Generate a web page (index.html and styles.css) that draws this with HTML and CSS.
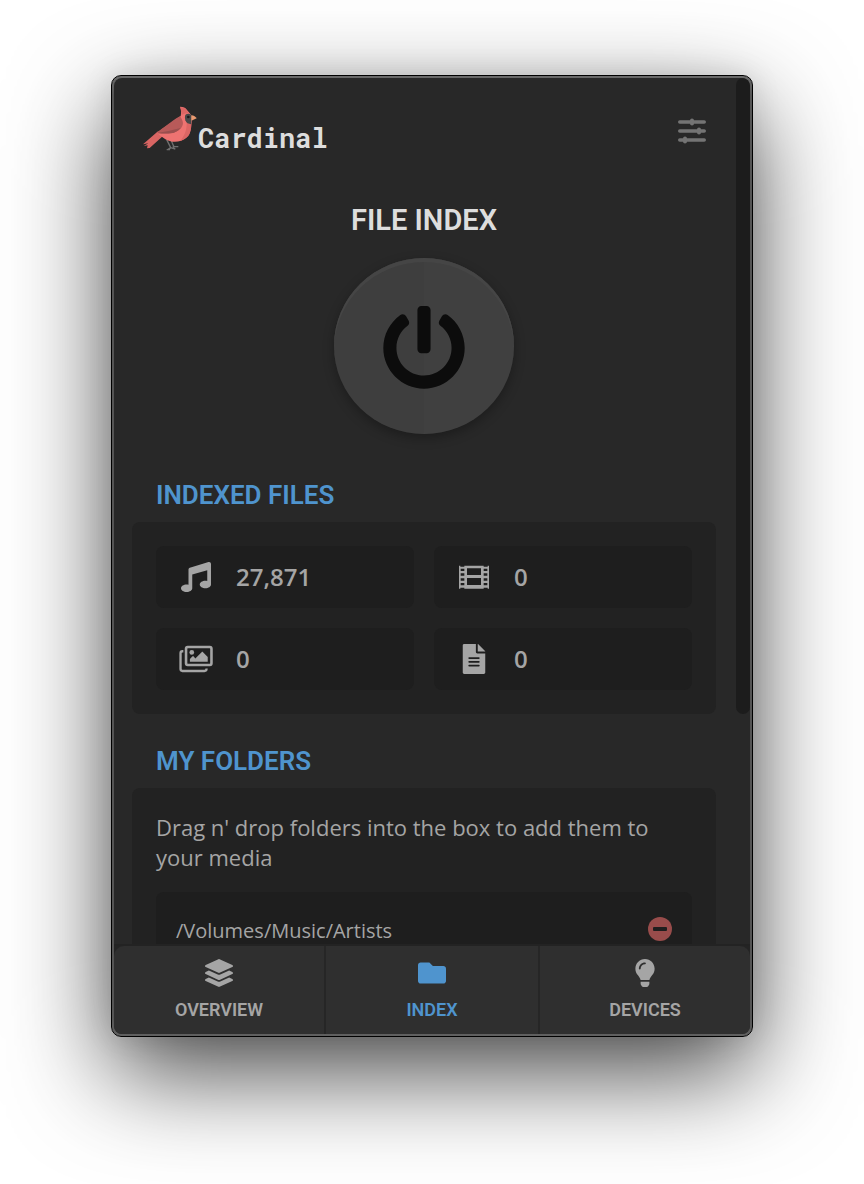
FILE: index.html
```html
<!DOCTYPE html>
<html lang="en">
<head>
<meta charset="utf-8">
<meta name="viewport" content="width=device-width, initial-scale=1">
<title>Cardinal</title>
<link rel="stylesheet" href="styles.css">
</head>
<body>
<div class="window">
  <div class="view">
    <main class="content">
      <header class="header">
        <div class="brand">
          <svg class="brand-bird" viewBox="15 20 162 132" aria-hidden="true">
            <path fill="none" stroke="#707070" stroke-width="4" d="M86 118l12 24M99 119l8 19M90 147l8-5 14 4M98 142l-4 5M104 139h17M110 138l-4 4M86 148h10"/>
            <path fill="#d96563" d="M60 93L15 132l16-3-14 8 12-2-2 9 8-1L74 108z"/>
            <path fill="#ee7371" d="M56 97l72-50c2-8 0-12 2-16l-4-12c10 0 17 3 21 10l12 14c4 8 5 16 1 30-1 16-5 30-14 38-12 11-28 15-43 13-22-4-32-17-47-27z"/>
            <path fill="#dc6664" d="M127 21c12 1 16 4 20 10l6 9c-10-2-16 0-22 4zM146 64c6 8 11 8 14 8 0 14-3 27-9 35-6 7-15 12-24 15 14-18 20-36 19-58z"/>
            <path fill="#b85a59" d="M126 48c10 14 12 24 4 34-8 9-18 15-32 17-14 2-26 0-41-1 9-10 20-16 29-23 14-10 27-22 40-27z"/>
            <path fill="#9a4f4e" d="M57 98c24-4 44-8 72-16-10 11-20 16-32 17-14 2-26 0-40-1z"/>
            <path fill="#484848" d="M144 42c8-4 14-2 17 4v14l-2 12c-8-1-14-4-17-12-2-8-2-14 2-18z"/>
            <circle cx="151" cy="50" r="4" fill="#191919"/>
            <path fill="#e99a70" d="M160 45c8 0 13 5 16 9l-16 7z"/>
          </svg>
          <span class="brand-name">Cardinal</span>
        </div>
        <button class="icon-button" type="button" aria-label="Settings">
          <svg viewBox="0 0 28 26" aria-hidden="true">
            <path fill="none" stroke="currentColor" stroke-width="3.600" stroke-linecap="round" d="M1.800 4h24.400M1.800 13h24.400M1.800 22h24.400"/>
            <path fill="none" stroke="currentColor" stroke-width="4" stroke-linecap="round" d="M14 2.500v3M21 11.500v3M7 20.500v3"/>
          </svg>
        </button>
      </header>

      <section class="power">
        <h1 class="power-title">FILE INDEX</h1>
        <button class="power-button" type="button" aria-label="Toggle file index">
          <svg viewBox="0 0 512 512" aria-hidden="true"><path fill="currentColor" d="M400 54.1c63 45 104 118.6 104 201.9 0 136.8-110.8 247.7-247.5 248C120 504.3 8.2 393 8 256.4 7.9 173.1 48.9 99.3 111.8 54.2c11.7-8.3 28-4.8 35 7.7L162.6 90c5.9 10.5 3.1 23.8-6.6 31-41.5 30.8-68 79.6-68 134.9-.1 92.3 74.5 168.1 168 168.1 91.6 0 168.6-74.2 168-169.1-.3-51.8-24.7-101.8-68.1-134-9.7-7.2-12.4-20.5-6.5-30.9l15.8-28.1c7-12.4 23.2-16.1 34.8-7.8zM296 264V24c0-13.3-10.7-24-24-24h-32c-13.3 0-24 10.7-24 24v240c0 13.3 10.7 24 24 24h32c13.3 0 24-10.7 24-24z"/></svg>
        </button>
      </section>

      <section class="group">
        <h2 class="group-title">INDEXED FILES</h2>
        <div class="panel stats">
          <div class="stat">
            <svg class="stat-icon" viewBox="0 0 512 512" role="img" aria-label="Music"><path fill="currentColor" d="M511.99 32.01c0-21.71-21.1-37.01-41.6-30.51L150.4 96c-13.3 4.2-22.4 16.5-22.4 30.5v261.42c-10.05-2.38-20.72-3.92-32-3.92-53.02 0-96 28.65-96 64s42.98 64 96 64 96-28.65 96-64V214.31l256-75.02v184.63c-10.05-2.38-20.72-3.92-32-3.92-53.02 0-96 28.65-96 64s42.98 64 96 64 96-28.65 96-64l-.01-351.99z"/></svg>
            <span>27,871</span>
          </div>
          <div class="stat">
            <svg class="stat-icon" viewBox="0 0 90 90" role="img" aria-label="Video"><path fill="currentColor" fill-rule="evenodd" d="M0 11h4v3h12v-3h58v3h12v-3h4v69h-4v-3H74v3H16v-3H4v3H0zM24 19v20h42V19zM24 48v21h42V48zM5 20v7h11v-7zM5 34v7h11v-7zM5 49v7h11v-7zM5 63v7h11v-7zM74 20v7h11v-7zM74 34v7h11v-7zM74 49v7h11v-7zM74 63v7h11v-7z"/></svg>
            <span>0</span>
          </div>
          <div class="stat">
            <svg class="stat-icon" viewBox="0 0 576 512" role="img" aria-label="Images">
              <path fill="none" stroke="currentColor" stroke-width="40" d="M72 124H56c-20 0-32 12-32 32v272c0 20 12 32 32 32h376c24 0 36-12 36-36v-8"/>
              <rect x="118" y="52" width="434" height="306" rx="28" fill="none" stroke="currentColor" stroke-width="44"/>
              <circle cx="216" cy="144" r="40" fill="currentColor"/>
              <path fill="currentColor" d="M184 304v-48l40-42c10-8 18-8 26 0l26 32 108-106c8-8 16-8 24 0l80 80v84z"/>
            </svg>
            <span>0</span>
          </div>
          <div class="stat">
            <svg class="stat-icon" viewBox="-64 0 512 512" role="img" aria-label="Documents"><path fill="currentColor" fill-rule="evenodd" d="M224 136V0H24C10.700 0 0 10.700 0 24v464c0 13.300 10.700 24 24 24h336c13.300 0 24-10.700 24-24V160H248c-13.200 0-24-10.800-24-24zM288 372c0 6.600-5.400 12-12 12H108c-6.600 0-12-5.400-12-12v-8c0-6.600 5.400-12 12-12h168c6.600 0 12 5.400 12 12zM288 308c0 6.600-5.400 12-12 12H108c-6.600 0-12-5.400-12-12v-8c0-6.600 5.400-12 12-12h168c6.600 0 12 5.400 12 12zM288 244c0 6.600-5.400 12-12 12H108c-6.600 0-12-5.400-12-12v-8c0-6.600 5.400-12 12-12h168c6.600 0 12 5.400 12 12zM384 128v-6L262 0h-6v128z"/></svg>
            <span>0</span>
          </div>
        </div>
      </section>

      <section class="group">
        <h2 class="group-title">MY FOLDERS</h2>
        <div class="panel">
          <p class="hint">Drag n' drop folders into the box to add them to your media</p>
          <ul class="folders">
            <li class="folder">
              <span>/Volumes/Music/Artists</span>
              <button class="remove-button" type="button" aria-label="Remove /Volumes/Music/Artists">
                <svg viewBox="0 0 24 24" aria-hidden="true"><circle cx="12" cy="12" r="12" fill="currentColor"/><rect x="5" y="10" width="14" height="4" rx="1" fill="#1e1e1e"/></svg>
              </button>
            </li>
          </ul>
        </div>
      </section>
    </main>
    <div class="scroll-track"><div class="scroll-thumb"></div></div>
  </div>

  <nav class="tabs">
    <a class="tab" href="#overview">
      <svg viewBox="0 0 512 512" aria-hidden="true"><path fill="currentColor" d="M12.410 148.020l232.940 105.670c6.800 3.090 14.490 3.090 21.290 0l232.940-105.670c16.550-7.510 16.550-32.520 0-40.030L266.650 2.310a25.607 25.607 0 0 0-21.290 0L12.410 107.980c-16.550 7.510-16.550 32.530 0 40.040zm487.180 88.280l-58.090-26.330-161.640 73.270c-7.560 3.430-15.590 5.170-23.860 5.170s-16.290-1.740-23.860-5.170L70.510 209.970l-58.100 26.330c-16.550 7.500-16.550 32.500 0 40l232.940 105.590c6.800 3.080 14.490 3.080 21.290 0L499.590 276.300c16.550-7.500 16.550-32.500 0-40zm0 127.800l-57.870-26.230-161.860 73.370c-7.560 3.430-15.590 5.170-23.860 5.170s-16.290-1.740-23.860-5.170L70.290 337.870 12.410 364.100c-16.550 7.500-16.550 32.500 0 40l232.940 105.590c6.800 3.080 14.490 3.080 21.290 0L499.590 404.100c16.550-7.500 16.550-32.500 0-40z"/></svg>
      OVERVIEW
    </a>
    <a class="tab tab-active" href="#index" aria-current="page">
      <svg viewBox="0 0 512 512" aria-hidden="true"><path fill="currentColor" d="M464 128H272l-64-64H48C21.490 64 0 85.490 0 112v288c0 26.510 21.490 48 48 48h416c26.510 0 48-21.490 48-48V176c0-26.510-21.490-48-48-48z"/></svg>
      INDEX
    </a>
    <a class="tab" href="#devices">
      <svg viewBox="-80 0 512 512" aria-hidden="true"><path fill="currentColor" d="M96.060 454.350c.01 6.290 1.870 12.450 5.360 17.690l17.090 25.690a31.990 31.990 0 0 0 26.640 14.280h61.710a31.990 31.990 0 0 0 26.640-14.280l17.090-25.690a31.989 31.989 0 0 0 5.360-17.690l.04-38.350H96.010l.05 38.350zM0 176c0 44.370 16.450 84.850 43.560 115.780 16.520 18.850 42.360 58.230 52.210 91.450.04.26.07.52.11.78h160.240c.04-.26.07-.51.11-.78 9.850-33.220 35.690-72.600 52.210-91.450C335.550 260.850 352 220.370 352 176 352 78.610 272.910-.3 175.450 0 73.440.31 0 82.970 0 176zm176-80c-44.110 0-80 35.890-80 80 0 8.840-7.160 16-16 16s-16-7.160-16-16c0-61.760 50.240-112 112-112 8.840 0 16 7.160 16 16s-7.160 16-16 16z"/></svg>
      DEVICES
    </a>
  </nav>
</div>
</body>
</html>
```
FILE: styles.css
```css
* {
  box-sizing: border-box;
}

body {
  margin: 0;
  height: 100vh;
  padding: 75px 111px 147px;
  display: flex;
  background: #fff;
  color: #a5a5a5;
  font-family: "Open Sans", "Noto Sans", sans-serif;
  overflow: hidden;
}

h1, h2, p, ul {
  margin: 0;
  padding: 0;
}

button {
  border: 0;
  padding: 0;
  background: none;
  cursor: pointer;
}

svg {
  display: block;
}

.window {
  flex: 1;
  min-width: 0;
  display: flex;
  flex-direction: column;
  padding: 2px;
  border: 1px solid #000;
  border-radius: 10px;
  background: linear-gradient(#6a6a6a, #555 2%, #555 98%, #606060);
  box-shadow: 0 36px 100px rgba(0, 0, 0, 0.72), 0 0 30px rgba(0, 0, 0, 0.1);
}

.view {
  flex: 1;
  min-height: 0;
  display: flex;
  overflow: hidden;
  border-radius: 8px 8px 0 0;
  background: #282828;
}

.content {
  flex: 1;
  min-width: 0;
  overflow: hidden;
  padding: 0 20px 0 18px;
}

.scroll-track {
  width: 14px;
}

.scroll-thumb {
  height: 73.4%;
  border-radius: 8px;
  background: #1c1c1c;
}

.header {
  display: flex;
  justify-content: space-between;
  padding: 28px 10px 0 11px;
}

.brand {
  display: flex;
  gap: 1px;
}

.brand-bird {
  width: 54px;
  height: 46px;
}

.brand-name {
  padding-top: 14px;
  color: #ddd;
  font: 700 27px/36px "Roboto Mono", "DejaVu Sans Mono", monospace;
}

.icon-button {
  align-self: flex-start;
  margin-top: 12px;
  color: #747474;
}

.icon-button svg {
  width: 28px;
  height: 26px;
}

.power {
  display: flex;
  flex-direction: column;
  align-items: center;
  padding-top: 47px;
}

.power-title {
  color: #ddd;
  font: 600 29px/34px Roboto, sans-serif;
}

.power-button {
  width: 180px;
  height: 176px;
  margin-top: 21px;
  padding-top: 4px;
  display: grid;
  place-items: center;
  border-radius: 50%;
  background: linear-gradient(90deg, #3e3e3e 50%, #404040 50%);
  color: #0c0c0c;
  box-shadow: inset 0 4px 0 #454545, 0 4px 12px rgba(0, 0, 0, 0.3);
}

.power-button svg {
  width: 84px;
  height: 84px;
}

.group {
  padding-top: 32px;
}

.power + .group {
  padding-top: 46px;
}

.group-title {
  padding: 0 24px 12px;
  color: #4f94ce;
  font: 600 26px/30px Roboto, sans-serif;
}

.panel {
  padding: 24px;
  border-radius: 8px;
  background: #222;
}

.stats {
  display: grid;
  grid-template-columns: 1fr 1fr;
  gap: 20px;
}

.stat {
  height: 62px;
  display: flex;
  align-items: center;
  gap: 20px;
  padding: 0 20px;
  border-radius: 8px;
  background: #1e1e1e;
  font-size: 24px;
  font-weight: 600;
  line-height: 32px;
}

.stat-icon {
  width: 40px;
  height: 30px;
}

.hint {
  padding-bottom: 20px;
  font-size: 22px;
  line-height: 30px;
}

.folders {
  min-height: 120px;
  padding: 24px 20px;
  border-radius: 8px;
  background: #1e1e1e;
  list-style: none;
}

.folder {
  display: flex;
  align-items: flex-start;
  justify-content: space-between;
  font-size: 20px;
  line-height: 30px;
}

.remove-button {
  padding-top: 1px;
  color: #984c4b;
}

.remove-button svg {
  width: 24px;
  height: 24px;
}

.tabs {
  display: grid;
  grid-template-columns: repeat(3, 1fr);
  border-top: 2px solid #232323;
  border-radius: 0 0 8px 8px;
  background: linear-gradient(#242424 12px, #2f2f2f 12px);
}

.tab {
  height: 88px;
  display: flex;
  flex-direction: column;
  align-items: center;
  gap: 12px;
  padding-top: 13px;
  background: #2f2f2f;
  color: #a5a5a5;
  font: 600 18px/22px Roboto, sans-serif;
  text-decoration: none;
}

.tab:first-child {
  border-right: 2px solid #262626;
  border-radius: 10px 0 0 8px;
}

.tab:last-child {
  border-left: 2px solid #262626;
  border-radius: 0 10px 8px 0;
}

.tab svg {
  width: 28px;
  height: 28px;
}

.tab-active {
  color: #4f94ce;
}
```
